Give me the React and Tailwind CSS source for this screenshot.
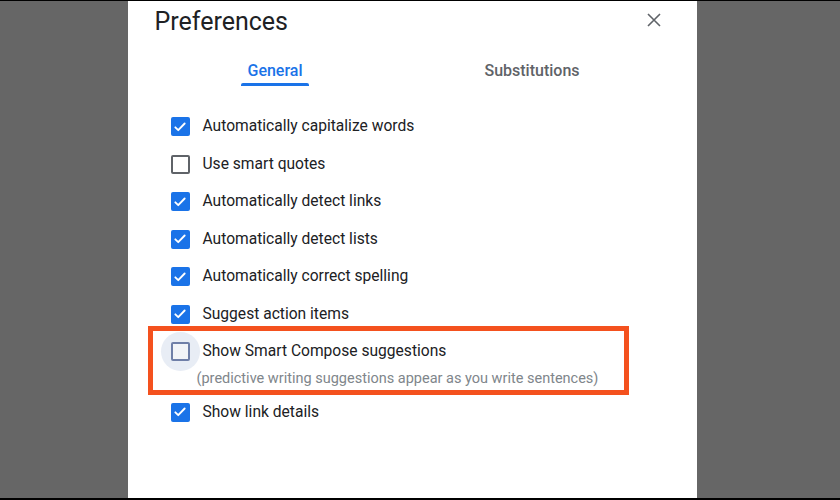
import React from "react";

const items = [
  { label: "Automatically capitalize words", checked: true },
  { label: "Use smart quotes", checked: false },
  { label: "Automatically detect links", checked: true },
  { label: "Automatically detect lists", checked: true },
  { label: "Automatically correct spelling", checked: true },
  { label: "Suggest action items", checked: true },
];

function Box({ checked, focus }) {
  if (checked) {
    return (
      <span className="flex h-[19px] w-[19px] items-center justify-center rounded-[2px] bg-[#1a73e8]">
        <svg width="14" height="14" viewBox="0 0 24 24" fill="none" stroke="white" strokeWidth="3.2" strokeLinecap="round" strokeLinejoin="round">
          <path d="M4 12.5l5 5L20 6" />
        </svg>
      </span>
    );
  }
  return (
    <span className="relative flex h-[19px] w-[19px] items-center justify-center">
      {focus && <span className="absolute -left-[10px] -top-[10px] h-[39px] w-[39px] rounded-full bg-[#e8edf5]" />}
      <span className={"relative h-[19px] w-[19px] rounded-[2px] border-2 " + (focus ? "border-[#6f7fa8] bg-[#f2f4f8]" : "border-[#5f6368] bg-white")} />
    </span>
  );
}

function Row({ label, checked, focus }) {
  return (
    <div className="flex h-[37.5px] items-center">
      <div className="flex w-[32px] justify-start">
        <Box checked={checked} focus={focus} />
      </div>
      <span className="text-[15.6px] text-[#202124]">{label}</span>
    </div>
  );
}

export default function App() {
  return (
    <div className="relative flex h-[500px] w-[840px] justify-center overflow-hidden border-t border-b-2 border-black bg-[#666666]" style={{ fontFamily: "Roboto, 'Noto Sans', sans-serif" }}>
      <div className="ml-[-16px] h-full w-[569px] bg-white">
        <div className="flex items-start justify-between pl-[27px] pr-[36px] pt-[5px]">
          <h1 className="text-[25px] leading-[32px] text-[#202124]">Preferences</h1>
          <svg className="mt-[7px]" width="14" height="14" viewBox="0 0 14 14" stroke="#5f6368" strokeWidth="1.6">
            <path d="M1 1l12 12M13 1L1 13" />
          </svg>
        </div>
        <div className="ml-[19px] mt-[20px] grid w-[514px] grid-cols-2">
          <div className="flex justify-center">
            <div className="flex flex-col items-center">
              <span className="px-[6px] text-[16px] font-medium leading-[26px] text-[#1a73e8]">General</span>
              <span className="-mt-[1px] h-[3px] w-full rounded-t-[2px] bg-[#1a73e8]" />
            </div>
          </div>
          <div className="flex justify-center">
            <span className="text-[16px] font-medium leading-[26px] text-[#5f6368]">Substitutions</span>
          </div>
        </div>
        <div className="relative ml-[43px] mt-[22px]">
          {items.map((it) => (
            <Row key={it.label} label={it.label} checked={it.checked} />
          ))}
          <Row label="Show Smart Compose suggestions" checked={false} focus />
          <div className="ml-[26px] -mt-[2px] text-[14.5px] leading-[20px] text-[#80868b]">
            (predictive writing suggestions appear as you write sentences)
          </div>
          <div className="mt-[5px]">
            <Row label="Show link details" checked />
          </div>
          <div className="absolute left-[-23px] top-[218px] h-[69px] w-[481px] border-[5px] border-[#f4511e]" />
        </div>
      </div>
    </div>
  );
}
